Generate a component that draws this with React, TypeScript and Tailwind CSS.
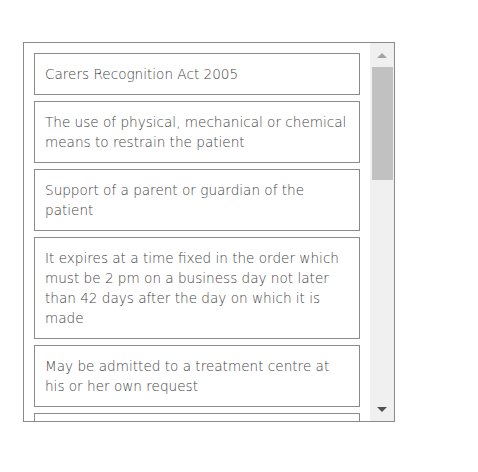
import React from 'react';

const items = [
  'Carers Recognition Act 2005',
  'The use of physical, mechanical or chemical means to restrain the patient',
  'Support of a parent or guardian of the patient',
  'It expires at a time fixed in the order which must be 2 pm on a business day not later than 42 days after the day on which it is made',
  'May be admitted to a treatment centre at his or her own request',
  'The patient has a mental disorder',
];

export default function App() {
  return (
    <div className="w-[478px] h-[472px] bg-white pt-[42px] pl-[23px]" style={{ fontFamily: '"DejaVu Sans", sans-serif' }}>
      <div className="flex w-[372px] h-[380px] border border-[#8a8a8a] bg-white">
        {/* list */}
        <div className="flex-1 overflow-hidden pt-[10px] pl-[10px] pr-[10px]">
          <div className="flex flex-col gap-[6px]">
            {items.map((t) => (
              <div
                key={t}
                className="border border-[#8a8a8a] px-[10px] py-[10px] text-[13.6px] leading-[20px] font-light text-[#444]"
              >
                {t}
              </div>
            ))}
          </div>
        </div>

        {/* scrollbar */}
        <div className="w-[24px] shrink-0 bg-[#f0f0f0] flex flex-col">
          <div className="h-[24px] flex items-center justify-center">
            <div className="w-0 h-0 border-l-[5px] border-r-[5px] border-b-[5px] border-l-transparent border-r-transparent border-b-[#a3a3a3]" />
          </div>
          <div className="ml-[2px] w-[21px] h-[113px] bg-[#c1c1c1]" />
          <div className="flex-1" />
          <div className="h-[24px] flex items-center justify-center">
            <div className="w-0 h-0 border-l-[5px] border-r-[5px] border-t-[5px] border-l-transparent border-r-transparent border-t-[#505050]" />
          </div>
        </div>
      </div>
    </div>
  );
}
